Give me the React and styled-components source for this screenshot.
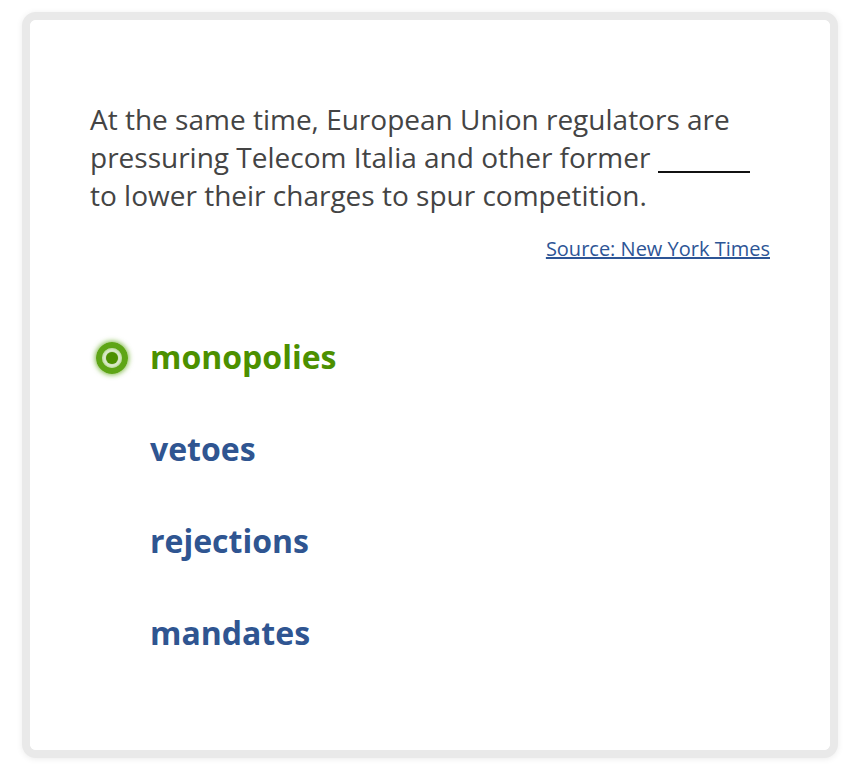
import React from "react";
import styled, { createGlobalStyle } from "styled-components";

const GlobalStyle = createGlobalStyle`
  html, body {
    margin: 0;
    padding: 0;
    background: #ffffff;
  }
  body {
    font-family: "Open Sans", "Liberation Sans", sans-serif;
  }
`;

const Page = styled.div`
  padding: 12px 26px 12px 22px;
`;

const Frame = styled.div`
  width: 800px;
  height: 730px;
  border: 8px solid #e9e9e9;
  border-radius: 14px;
  background: #ffffff;
  box-shadow: 0 1px 6px rgba(0, 0, 0, 0.08);
`;

const Card = styled.div`
  height: 100%;
  box-sizing: border-box;
  padding: 80px 60px 0 60px;
  border-radius: 6px;
  background: #ffffff;
`;

const Question = styled.p`
  margin: 0;
  font-size: 28px;
  line-height: 38px;
  color: #444444;
`;

const Blank = styled.span`
  display: inline-block;
  width: 92px;
  border-bottom: 2px solid #111111;
  vertical-align: -5px;
`;

const Source = styled.div`
  margin-top: 23px;
  text-align: right;
  font-size: 20px;
  line-height: 24px;

  a {
    color: #2d5596;
    text-decoration: underline;
  }
`;

const Options = styled.ul`
  list-style: none;
  margin: 73px 0 0 0;
  padding: 0;
  display: flex;
  flex-direction: column;
  gap: 48px;
`;

const Option = styled.li`
  display: flex;
  align-items: center;
  height: 44px;
  padding-left: 60px;
  position: relative;
  font-size: 32px;
  font-weight: 700;
  color: ${(p) => (p.$selected ? "#4c9000" : "#2f5591")};
`;

const Radio = styled.span`
  position: absolute;
  left: 6px;
  top: 50%;
  width: 20px;
  height: 20px;
  margin-top: -14px;
  border-radius: 50%;
  border: 6px solid #5ea516;
  box-shadow: 0 0 5px 1px rgba(94, 165, 22, 0.75),
    inset 0 0 4px 1px rgba(94, 165, 22, 0.6);
  display: flex;
  align-items: center;
  justify-content: center;

  &::after {
    content: "";
    width: 12px;
    height: 12px;
    border-radius: 50%;
    background: #4c9000;
    box-shadow: 0 0 2px rgba(76, 144, 0, 0.8);
  }
`;

const choices = [
  { label: "monopolies", selected: true },
  { label: "vetoes" },
  { label: "rejections" },
  { label: "mandates" },
];

export default function App() {
  return (
    <>
      <GlobalStyle />
      <Page>
        <Frame>
          <Card>
            <Question>
              At the same time, European Union regulators are pressuring
              Telecom Italia and other former <Blank /> to lower their charges
              to spur competition.
            </Question>
            <Source>
              <a href="#">Source: New York Times</a>
            </Source>
            <Options>
              {choices.map((c) => (
                <Option key={c.label} $selected={c.selected}>
                  {c.selected && <Radio />}
                  {c.label}
                </Option>
              ))}
            </Options>
          </Card>
        </Frame>
      </Page>
    </>
  );
}
